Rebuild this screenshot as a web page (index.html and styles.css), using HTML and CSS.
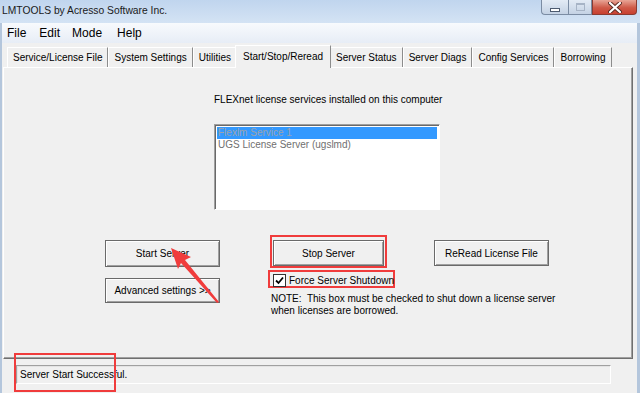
FILE: index.html
```html
<!DOCTYPE html>
<html lang="en">
<head>
    <meta charset="UTF-8">
    <title>LMTOOLS by Acresso Software Inc.</title>
    <link rel="stylesheet" href="styles.css">
</head>
<body>
    <div class="window">
        <div class="titlebar">
            <span class="title">LMTOOLS by Acresso Software Inc.</span>
            <div class="caption-buttons">
                <span class="cb cb-min"><i></i></span>
                <span class="cb cb-max"><i></i></span>
                <span class="cb cb-close">
                    <svg width="14" height="11" viewBox="0 0 14 11">
                        <path d="M2 1 L12 10 M12 1 L2 10" stroke="#5a2a22" stroke-width="4" stroke-linecap="round"/>
                        <path d="M2 1 L12 10 M12 1 L2 10" stroke="#ffffff" stroke-width="2.2" stroke-linecap="round"/>
                    </svg>
                </span>
            </div>
        </div>

        <div class="frame">
            <div class="menubar">
                <span class="menu-item">File</span>
                <span class="menu-item">Edit</span>
                <span class="menu-item">Mode</span>
                <span class="menu-item">Help</span>
            </div>

            <div class="tabs">
                <span class="tab">Service/License File</span>
                <span class="tab">System Settings</span>
                <span class="tab">Utilities</span>
                <span class="tab active">Start/Stop/Reread</span>
                <span class="tab">Server Status</span>
                <span class="tab">Server Diags</span>
                <span class="tab">Config Services</span>
                <span class="tab">Borrowing</span>
            </div>

            <div class="panel">
                <div class="services">
                    <div class="caption">FLEXnet license services installed on this computer</div>
                    <div class="listbox">
                        <div class="list-item selected">Flexlm Service 1</div>
                        <div class="list-item">UGS License Server (ugslmd)</div>
                    </div>
                </div>

                <div class="controls">
                    <div class="col-left">
                        <button class="btn btn-start">Start Server</button>
                        <button class="btn btn-adv">Advanced settings &gt;&gt;</button>
                    </div>
                    <div class="col-mid">
                        <div class="mark mark-stop">
                            <button class="btn btn-stop">Stop Server</button>
                        </div>
                        <div class="mark mark-check">
                            <span class="checkbox">
                                <svg width="9" height="9" viewBox="0 0 9 9">
                                    <path d="M1 4.5 L3.5 7 L8 1.5" stroke="#000" stroke-width="1.8" fill="none"/>
                                </svg>
                            </span>
                            <span class="check-label">Force Server Shutdown</span>
                        </div>
                        <div class="note">NOTE:&nbsp; This box must be checked to shut down a license server<br>when licenses are borrowed.</div>
                    </div>
                    <div class="col-right">
                        <button class="btn btn-reread">ReRead License File</button>
                    </div>
                </div>
            </div>

            <div class="statusbar">
                <div class="status-field">Server Start Successful.</div>
            </div>
        </div>

        <div class="mark mark-status"></div>

        <svg class="arrow" width="640" height="393" viewBox="0 0 640 393">
            <polygon points="171,248 191,257 185,260 219,302 217,303 181,263 178,269" fill="#f03c3c"/>
        </svg>
    </div>
</body>
</html>
```

FILE: styles.css
```css
body {
    margin: 0;
    background-color: #f0f0f0;
    font-family: "Liberation Sans", Arial, sans-serif;
    font-size: 10px;
    color: #000;
}
.window {
    position: relative;
    width: 640px;
    height: 393px;
    overflow: hidden;
}
.titlebar {
    height: 23px;
    display: flex;
    justify-content: space-between;
    align-items: flex-start;
    background: linear-gradient(#c0d5ee, #d4e3f4);
}
.title {
    padding-left: 2px;
    line-height: 22px;
    font-size: 10.3px;
    color: #1a1a1a;
}
.caption-buttons {
    display: flex;
    margin-right: 3px;
}
.cb {
    height: 15px;
    display: flex;
    align-items: center;
    justify-content: center;
    border: 1px solid #7b8ca3;
    border-top: none;
    box-sizing: border-box;
}
.cb-min {
    width: 27px;
    border-right: none;
    border-radius: 0 0 0 4px;
    background: linear-gradient(#e3ebf5, #c4d2e4);
}
.cb-min i {
    width: 8px;
    height: 2px;
    margin-top: 5px;
    background: #fff;
    border: 1px solid #4d5b70;
}
.cb-max {
    width: 24px;
    background: linear-gradient(#e3ebf5, #c4d2e4);
}
.cb-max i {
    width: 7px;
    height: 5px;
    border: 1px solid #a7b4c6;
    border-top-width: 2px;
}
.cb-close {
    width: 45px;
    border-radius: 0 0 4px 0;
    border-color: #8a3b32;
    background: linear-gradient(#e8a596, #cf5a48 55%, #c84030);
}
.frame {
    border-left: 2px solid #b4c6dc;
    border-right: 3px solid #b4c6dc;
    height: 370px;
    display: flex;
    flex-direction: column;
}
.menubar {
    height: 20px;
    display: flex;
    align-items: center;
    background: linear-gradient(#f8fafd, #e7edf6);
    font-size: 12px;
}
.menu-item:nth-child(1) { margin-left: 5px; }
.menu-item:nth-child(2) { margin-left: 13px; }
.menu-item:nth-child(3) { margin-left: 12px; }
.menu-item:nth-child(4) { margin-left: 15px; }
.tabs {
    height: 24px;
    display: flex;
    align-items: flex-end;
    padding-left: 5px;
    font-size: 10px;
}
.tab {
    height: 19px;
    line-height: 19px;
    padding: 0 5px;
    border-top: 1px solid #fff;
    border-left: 1px solid #fff;
    border-right: 1px solid #8c8c8c;
}
.tab.active {
    position: relative;
    z-index: 1;
    height: 22px;
    line-height: 21px;
    margin: 0 -1px -1px -2px;
    padding: 0 7px;
    background: #f0f0f0;
}
.panel {
    height: 292px;
    margin: 0 4px 0 1px;
    box-sizing: border-box;
    border: 1px solid;
    border-color: #fff #6f6f6f #6f6f6f #fff;
    box-shadow: inset -1px -1px 0 #a0a0a0;
    padding-top: 26px;
}
.services {
    margin-left: 210px;
}
.caption {
    line-height: 12px;
}
.listbox {
    width: 226px;
    height: 86px;
    margin-top: 18px;
    box-sizing: border-box;
    background: #fff;
    border: 1px solid;
    border-color: #a0a0a0 #fff #fff #a0a0a0;
    box-shadow: inset 1px 1px 0 #696969;
    padding: 2px 2px 0 2px;
}
.list-item {
    height: 12px;
    line-height: 12px;
    padding-left: 1px;
    color: #707070;
}
.list-item.selected {
    background: #3399ff;
    color: #9aa3ad;
}
.controls {
    display: flex;
    align-items: flex-start;
    margin-top: 25px;
    padding-left: 101px;
}
.btn {
    display: block;
    margin: 0;
    padding: 0;
    font-family: inherit;
    font-size: 10px;
    color: #000;
    background: #f0f0f0;
    border: 1px solid #6a6a6a;
    box-shadow: inset 1px 1px 0 #fff, inset -1px -1px 0 #a0a0a0;
}
.col-left {
    display: flex;
    flex-direction: column;
    gap: 11px;
    margin-top: 5px;
    width: 115px;
}
.btn-start {
    width: 115px;
    height: 27px;
}
.btn-adv {
    width: 115px;
    height: 25px;
}
.col-mid {
    width: 117px;
    margin-left: 50px;
}
.mark {
    border: 2px solid #f03c3c;
    box-sizing: border-box;
}
.mark-stop {
    width: 117px;
    padding: 3px 1px 0 1px;
}
.btn-stop {
    width: 111px;
    height: 26px;
}
.mark-check {
    width: 127px;
    height: 18px;
    margin: 2px 0 0 -2px;
    padding: 2px 0 0 3px;
    display: flex;
    align-items: flex-start;
    white-space: nowrap;
}
.checkbox {
    width: 13px;
    height: 13px;
    flex: none;
    box-sizing: border-box;
    background: #fff;
    border: 1px solid #333;
    display: flex;
    align-items: center;
    justify-content: center;
}
.check-label {
    margin-left: 3px;
    line-height: 13px;
}
.note {
    width: 300px;
    margin: 5px 0 0 1px;
    line-height: 12px;
    white-space: nowrap;
}
.col-right {
    margin: 5px 0 0 47px;
}
.btn-reread {
    width: 115px;
    height: 26px;
}
.statusbar {
    flex: 1;
    padding: 6px 0 0 14px;
}
.status-field {
    width: 595px;
    height: 19px;
    box-sizing: border-box;
    border: 1px solid;
    border-color: #a0a0a0 #fff #fff #a0a0a0;
    box-shadow: inset 1px 1px 0 #e3e3e3;
    padding-left: 3px;
    line-height: 17px;
}
.mark-status {
    position: absolute;
    left: 14px;
    top: 353px;
    width: 102px;
    height: 39px;
}
.arrow {
    position: absolute;
    left: 0;
    top: 0;
    pointer-events: none;
}
```
